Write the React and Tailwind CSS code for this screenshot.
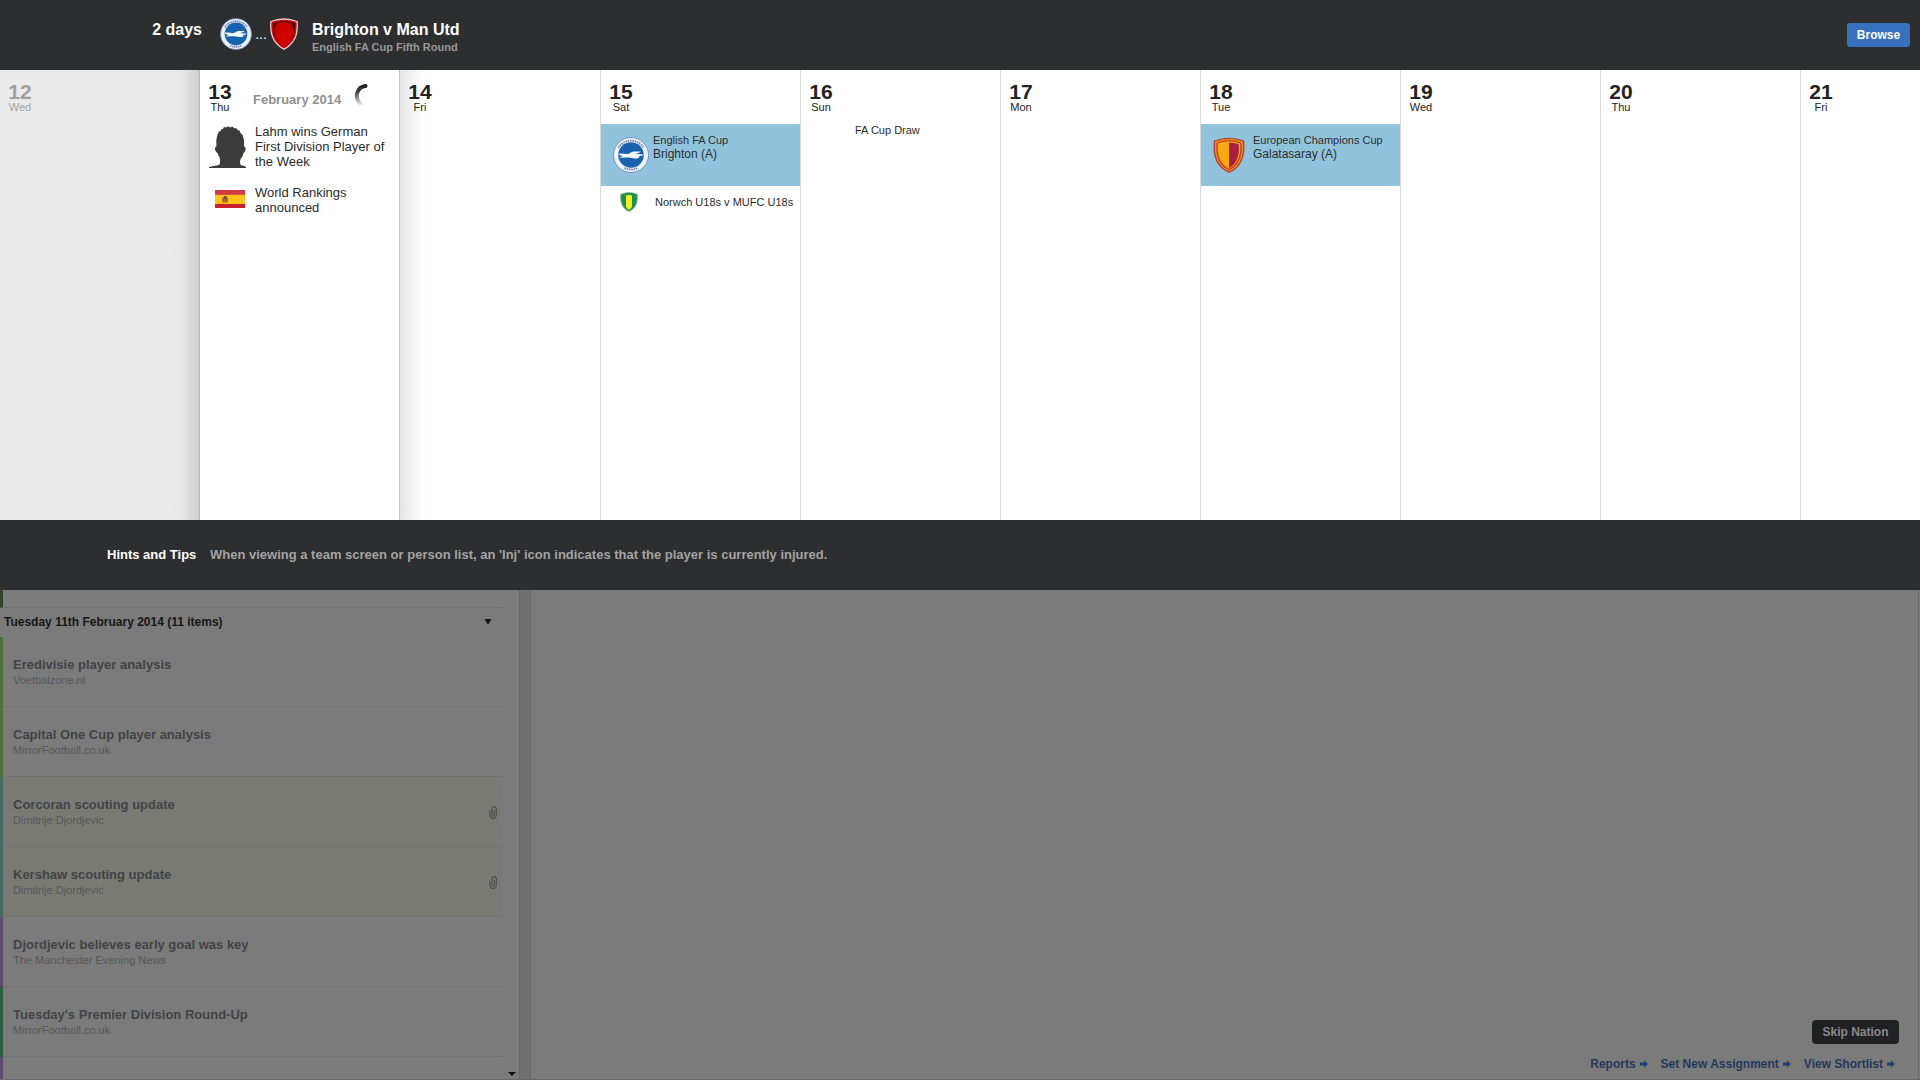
import React from 'react';

const days = [
    { date: 12, name: 'Wed', past: true },
    { date: 13, name: 'Thu', today: true },
    { date: 14, name: 'Fri' },
    { date: 15, name: 'Sat' },
    { date: 16, name: 'Sun' },
    { date: 17, name: 'Mon' },
    { date: 18, name: 'Tue' },
    { date: 19, name: 'Wed' },
    { date: 20, name: 'Thu' },
    { date: 21, name: 'Fri' },
];

const newsItems = [
    { title: 'Eredivisie player analysis', source: 'Voetbalzone.nl', stripe: 'border-[#4b6f3b]' },
    { title: 'Capital One Cup player analysis', source: 'MirrorFootball.co.uk', stripe: 'border-[#4b6f3b]' },
    { title: 'Corcoran scouting update', source: 'Dimitrije Djordjevic', stripe: 'border-[#44695f]', scouting: true },
    { title: 'Kershaw scouting update', source: 'Dimitrije Djordjevic', stripe: 'border-[#44695f]', scouting: true },
    { title: 'Djordjevic believes early goal was key', source: 'The Manchester Evening News', stripe: 'border-[#5f4a70]' },
    { title: "Tuesday's Premier Division Round-Up", source: 'MirrorFootball.co.uk', stripe: 'border-[#2b5f41]' },
];

const links = ['Reports', 'Set New Assignment', 'View Shortlist'];

const BrightonBadge = ({ className }) => (
    <svg viewBox="0 0 36 36" className={className} aria-hidden="true">
        <circle cx="18" cy="18" r="17.5" fill="#eef2f8" stroke="#5b86bd" strokeWidth="0.8" />
        {/* Lettering band, top and bottom */}
        <path d="M5.5 10.5 A14.8 14.8 0 0 1 30.5 10.5" fill="none" stroke="#6f7fb0" strokeWidth="2" strokeDasharray="1.4 0.9" />
        <path d="M11.5 31 A14.8 14.8 0 0 0 24.5 31" fill="none" stroke="#6f7fb0" strokeWidth="2" strokeDasharray="1.4 0.9" />
        <circle cx="18" cy="18" r="12.8" fill="#1b62ae" />
        <path d="M4 17 C8 15.5 12 17.2 15 17 C17 16.5 18 14.8 20.5 14.5 L28 14.5 C26 16 23.5 16.5 22 17.3 C25 16.8 28 17 31 17.8 C29 19 27.5 18.8 26 19 C27.5 20 25 21.8 22 21.4 C18 21 15 20.2 12 20.6 L6 21.2 L10 19.3 L5.5 19 L9 18.2 Z" fill="#f4f8fc" />
    </svg>
);

const UnitedShield = ({ className }) => (
    <svg viewBox="0 0 28 32" className={className} aria-hidden="true">
        <path d="M1 3.5 Q14 -1.5 27 3.5 C28.5 17 24 26 14 31.2 C4 26 -0.5 17 1 3.5 Z" fill="#d0000a" stroke="#f3cfd0" strokeWidth="1.3" />
        <path d="M3 5 Q14 1 25 5 C26 16 22.5 24 14 29 C5.5 24 2 16 3 5 Z" fill="#4d0508" />
        <path d="M6.5 5.5 Q14 3 21.5 5.5 C21.5 9 23.5 10 23.5 12.5 C23 20 20 25 14 29 C8 25 5 20 4.5 12.5 C4.5 10 6.5 9 6.5 5.5 Z" fill="#d10000" />
    </svg>
);

const GalatasarayShield = ({ className }) => (
    <svg viewBox="0 0 32 36" className={className} aria-hidden="true">
        <path d="M1.5 4 Q16 -1.5 30.5 4 C32 18 28 30 16 35.3 C4 30 0 18 1.5 4 Z" fill="#f08a1c" stroke="#b03a2e" strokeWidth="1.2" />
        <path d="M4.2 6 Q16 1.5 27.8 6 C29 18 25.5 27.5 16 32.8 C6.5 27.5 3 18 4.2 6 Z" fill="#f4a910" stroke="#c1352c" strokeWidth="1.2" />
        <path d="M16 5.5 Q21 5.5 25.5 7 C27 18 24 26 16 31.5 Z" fill="#a9203e" />
    </svg>
);

const NorwichShield = ({ className }) => (
    <svg viewBox="0 0 18 20" className={className} aria-hidden="true">
        <path d="M0.8 2.2 Q9 -1 17.2 2.2 C18 10 16 16.5 9 19.5 C2 16.5 0 10 0.8 2.2 Z" fill="#1f8f4a" stroke="#7fbf95" strokeWidth="0.8" />
        <path d="M6 3.5 Q9 2.5 12 3.5 V15 Q10.5 17 9 17.7 Q7.5 17 6 15 Z" fill="#f1ee2a" />
    </svg>
);

const Silhouette = () => (
    <svg viewBox="0 0 37 42" className="h-[42px] w-[37px]" aria-hidden="true">
        <path d="M0 42 V41 C4 40 9 39.5 10.5 38.5 C11.5 36 11 33 10.5 31 C9.5 30 9 28.5 8.5 27 C6.5 26.5 5.5 23 6.3 21 L7.5 20.5 C7 15 7.5 11 9 7.5 L10.5 5 L11.5 5.3 L12.5 3 L14 3 L15 1 L17 1.5 L19 0.3 L21 1.5 L23.5 0.6 L25 2.2 L27.5 2.2 L28.5 4 L30.5 4.5 L31.5 7 L33.5 9 C35 12.5 35.3 16 35 20.5 C37.5 20.8 37 26 34.5 27 C34 29.5 33 31.5 31.5 33 C31 35 30.8 37 31.5 38.8 C33 39.8 36 40 37 41 V42 Z" fill="#3b3b3b" />
    </svg>
);

const SpanishFlag = () => (
    <svg viewBox="0 0 30 18" className="h-[18px] w-[30px]" aria-hidden="true">
        <rect width="30" height="18" fill="#c8202c" />
        <rect y="4.5" width="30" height="9.5" fill="#fcc418" />
        <rect width="30" height="4.5" fill="#cf3c48" />
        <rect x="7" y="7" width="6" height="5.5" rx="1.5" fill="#b5652a" />
        <rect x="9" y="6" width="2.5" height="3" fill="#7c4a3a" />
    </svg>
);

const Spinner = () => (
    <svg viewBox="0 0 16 26" className="h-[26px] w-4" aria-hidden="true">
        <defs>
            <linearGradient id="fade" x1="0" y1="0" x2="0" y2="1">
                <stop offset="0" stopColor="#222" />
                <stop offset="0.3" stopColor="#444" />
                <stop offset="1" stopColor="#fff" />
            </linearGradient>
        </defs>
        <path d="M12.5 4 C4.5 5 -0.5 15 9 24" fill="none" stroke="url(#fade)" strokeWidth="4" strokeLinecap="round" />
    </svg>
);

const Paperclip = () => (
    <svg viewBox="0 0 8 13" className="h-[13px] w-2" fill="none" stroke="#3f4143" strokeWidth="0.9" aria-hidden="true">
        <path d="M1 4.5 V9.8 Q1 12.5 4 12.5 Q7.3 12.5 7.3 9.8 V2.8 Q7.3 0.6 5.2 0.6 Q3 0.6 3 2.8 V9 Q3 10.3 4.2 10.3 Q5.3 10.3 5.3 9 V4" />
    </svg>
);

const ArrowRight = () => (
    <svg viewBox="0 0 8 8" className="h-2 w-2" fill="#1c3f6e" aria-hidden="true">
        <path d="M0 2.6 H4 V0.3 L8 4 L4 7.7 V5.4 H0 Z" />
    </svg>
);

const Match = ({ badge, competition, opponent }) => (
    <div className="flex h-[62px] gap-1 bg-[#92c3dc] pt-[9px] pl-3 text-[#2b2e2e]">
        <div className="w-9 shrink-0 pt-1">{badge}</div>
        <div>
            <p className="text-[11px] leading-[14px]">{competition}</p>
            <p className="text-xs leading-[14px]">{opponent}</p>
        </div>
    </div>
);

const DayEvents = ({ date }) => {
    if (date === 13) {
        return (
            <ul className="text-[13px] leading-[15px] text-[#2b2b2b]">
                <li className="flex h-[61px] gap-[9px] pl-[9px]">
                    <div className="pt-0.5"><Silhouette /></div>
                    <p className="w-[136px]">Lahm wins German First Division Player of the Week</p>
                </li>
                <li className="flex gap-[10px] pl-[15px]">
                    <div className="pt-[5px]"><SpanishFlag /></div>
                    <p className="w-28">World Rankings announced</p>
                </li>
            </ul>
        );
    }
    if (date === 15) {
        return (
            <>
                <Match badge={<BrightonBadge className="h-9 w-9" />} competition="English FA Cup" opponent="Brighton (A)" />
                <div className="flex items-center gap-[17px] pt-1.5 pl-[19px] text-[11px] leading-5 text-[#2b2b2b]">
                    <NorwichShield className="h-5 w-[18px] shrink-0" />
                    <p className="whitespace-nowrap">Norwch U18s v MUFC U18s</p>
                </div>
            </>
        );
    }
    if (date === 16) {
        return <p className="pl-[54px] text-[11px] leading-3 text-[#2b2b2b]">FA Cup Draw</p>;
    }
    if (date === 18) {
        return (
            <Match
                badge={<GalatasarayShield className="h-9 w-8" />}
                competition="European Champions Cup"
                opponent="Galatasaray (A)"
            />
        );
    }
    return null;
};

const Day = ({ day }) => {
    let look = 'border-l border-[#d9d9d9] bg-white text-[#222]';
    // Past day and the day after today carry the shadow that today's column casts
    if (day.past) look = 'border-r border-[#b8b8b8] bg-[linear-gradient(to_left,#d0d0d0,#e6e6e6_16px,#ebebeb_28px)] text-[#a0a0a0]';
    if (day.today) look = 'border-r border-[#c4c4c4] bg-white text-[#222]';
    if (day.date === 14) look = 'bg-[linear-gradient(to_right,#e6e6e6,#ffffff_26px)] text-[#222]';

    return (
        <div className={`w-[200px] shrink-0 ${look}`}>
            <div className="flex h-[54px] pt-3">
                <div className="w-10 text-center">
                    <p className="text-[21px] leading-5 font-bold">{day.date}</p>
                    <p className="text-[11px] leading-[10px]">{day.name}</p>
                </div>
                {day.today && (
                    <div className="flex gap-3 pl-[13px]">
                        <p className="pt-2 text-[13px] leading-5 font-bold text-[#8f8f8f]">February 2014</p>
                        <Spinner />
                    </div>
                )}
            </div>
            <DayEvents date={day.date} />
        </div>
    );
};

const Header = () => (
    <header className="flex h-[70px] shrink-0 items-start bg-[#2c2e2f] pr-[10px] text-white">
        <p className="w-[202px] pt-5 text-right text-base leading-5 font-bold">2 days</p>
        <div className="ml-[18px] flex pt-[18px]">
            <BrightonBadge className="h-8 w-8" />
            <span className="w-[18px] pt-1.5 text-center text-sm leading-5">...</span>
            <UnitedShield className="h-8 w-7" />
        </div>
        <div className="ml-[14px] pt-5">
            <h1 className="text-base leading-5 font-bold">Brighton v Man Utd</h1>
            <p className="text-[11px] leading-[14px] font-bold text-[#999]">English FA Cup Fifth Round</p>
        </div>
        <button type="button" className="mt-[23px] ml-auto h-6 w-[63px] rounded-[3px] bg-[#3670be] text-xs font-bold text-white">
            Browse
        </button>
    </header>
);

const NewsList = () => (
    <section className="relative w-[519px] shrink-0 overflow-hidden">
        <div className="mr-4 h-[18px] border-b border-l-3 border-b-[#717171] border-l-[#35452a]" />
        <button type="button" className="flex h-7 w-[492px] items-center justify-between pl-1 text-xs font-bold text-[#161616]">
            Tuesday 11th February 2014 (11 items)
            <svg viewBox="0 0 8 6" className="h-1.5 w-2" fill="#161616" aria-hidden="true"><path d="M0.5 0 H7.5 L4 6 Z" /></svg>
        </button>
        <ul className="pt-px">
            {newsItems.map((item) => (
                <li key={item.title} className={`border-l-3 ${item.stripe}`}>
                    <div className={`mr-4 flex h-[70px] items-center justify-between border-b border-[#717171] pr-1.5 pl-[10px] ${item.scouting ? 'bg-[#7a7a74]' : ''}`}>
                        <div className="pt-px">
                            <p className="text-[13px] leading-4 font-bold text-[#414346]">{item.title}</p>
                            <p className="text-[11px] leading-[14px] text-[#55585a]">{item.source}</p>
                        </div>
                        {item.scouting && <div className="pt-0.5"><Paperclip /></div>}
                    </div>
                </li>
            ))}
        </ul>
        <div className="h-[22px] border-l-3 border-[#5f4a70]" />
        <svg viewBox="0 0 8 4" className="absolute right-[3px] bottom-[3px] h-1 w-2" fill="#111" aria-hidden="true"><path d="M0 0 H8 L4 4 Z" /></svg>
    </section>
);

const App = () => {
    return (
        <div className="flex min-h-screen flex-col overflow-hidden bg-[#7b7b7b] font-['Liberation_Sans',Arial,sans-serif]">
            <Header />

            <main className="flex h-[450px] shrink-0 overflow-hidden bg-white">
                {days.map((day) => (
                    <Day key={day.date} day={day} />
                ))}
            </main>

            {/* Hints bar */}
            <div className="flex h-[70px] shrink-0 items-center bg-[#2c2e2f] pl-[107px] text-[13px] font-bold">
                <h2 className="w-[103px] text-white">Hints and Tips</h2>
                <p className="text-[#a3a3a3]">
                    When viewing a team screen or person list, an 'Inj' icon indicates that the player is currently injured.
                </p>
            </div>

            {/* Dimmed screen behind the calendar */}
            <div className="flex flex-1 border-b border-[#686868]">
                <NewsList />
                <div className="w-3 border-x border-[#65676a] bg-[#6e7073]" />
                <div className="mr-px flex flex-1 flex-col items-end justify-end border-r border-[#6a6a6a] pr-[19px] pb-[7px]">
                    <button type="button" className="h-6 w-[87px] rounded bg-[#1f2124] text-xs font-bold text-[#8a8a8a]">
                        Skip Nation
                    </button>
                    <nav className="mt-3 mr-1 flex gap-[13px] text-xs leading-4 font-bold text-[#24385a]">
                        {links.map((link) => (
                            <a key={link} href="#" className="flex items-center gap-1">
                                {link}
                                <ArrowRight />
                            </a>
                        ))}
                    </nav>
                </div>
            </div>
        </div>
    );
};

export default App;
